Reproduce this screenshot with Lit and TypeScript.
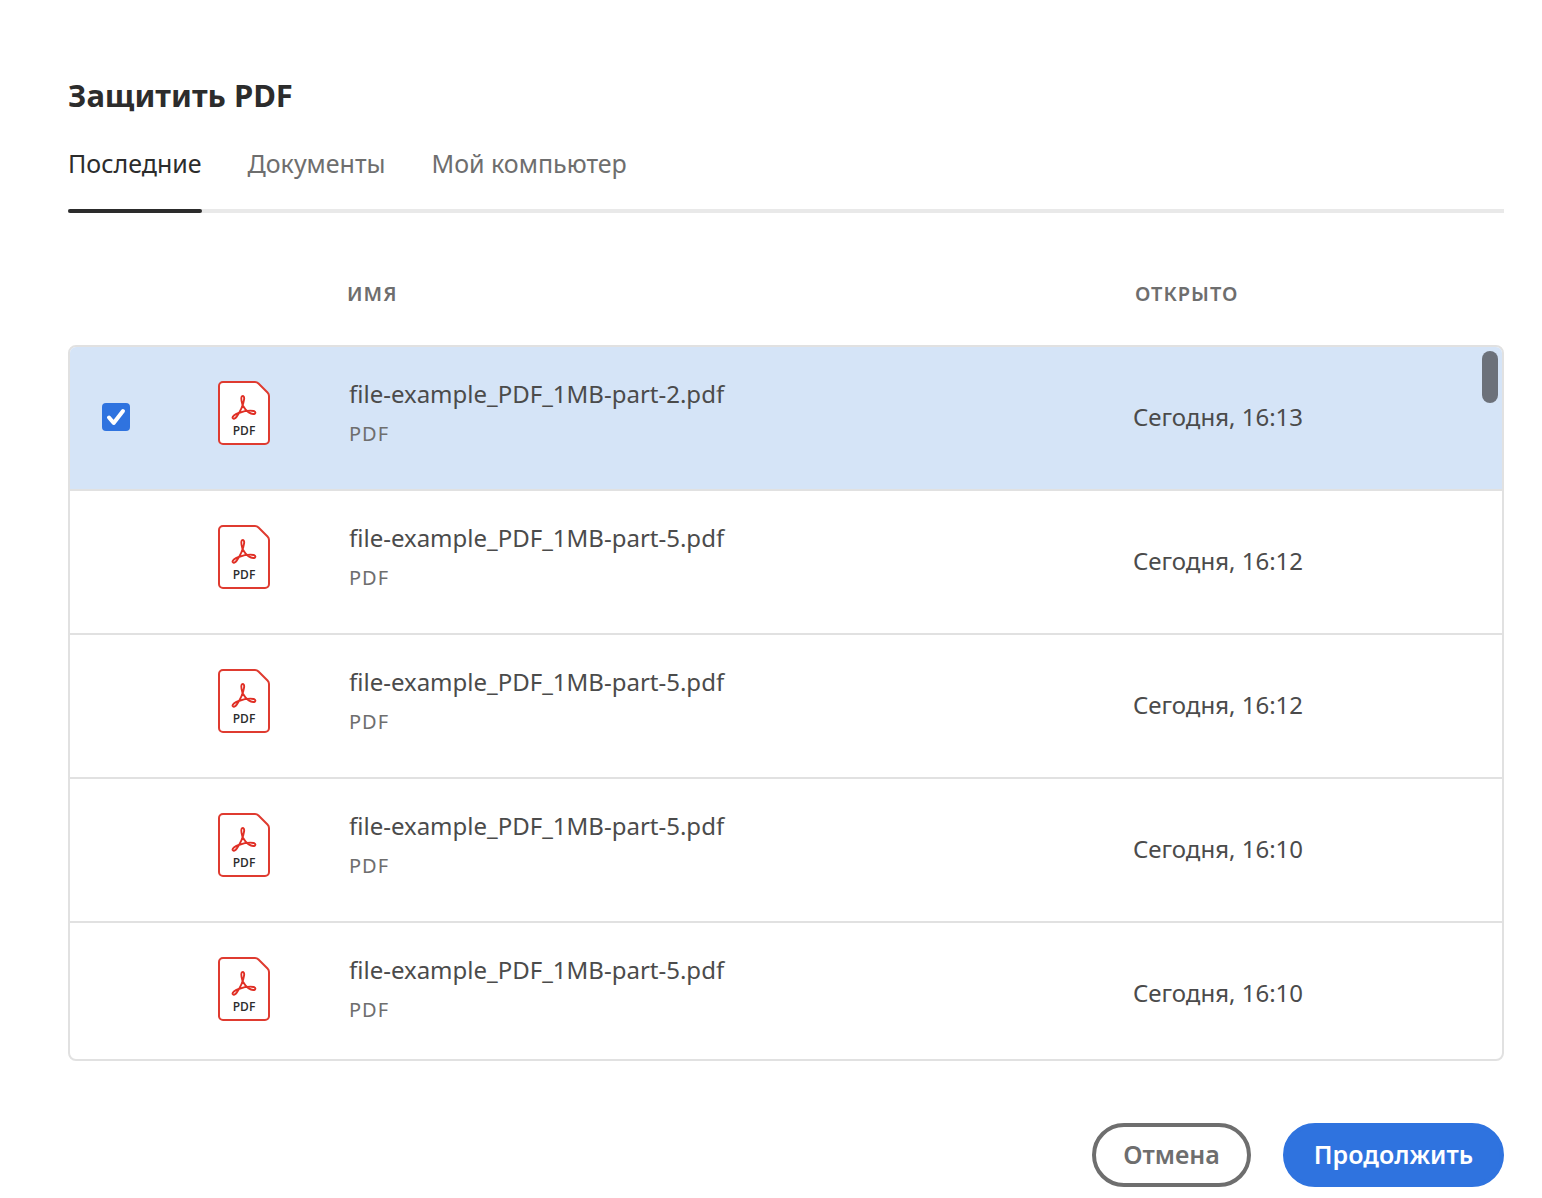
import { LitElement, html, css, svg } from "lit";
import { customElement, property, state } from "lit/decorators.js";

interface RecentFile {
  name: string;
  type: string;
  opened: string;
}

const FILES: RecentFile[] = [
  { name: "file-example_PDF_1MB-part-2.pdf", type: "PDF", opened: "Сегодня, 16:13" },
  { name: "file-example_PDF_1MB-part-5.pdf", type: "PDF", opened: "Сегодня, 16:12" },
  { name: "file-example_PDF_1MB-part-5.pdf", type: "PDF", opened: "Сегодня, 16:12" },
  { name: "file-example_PDF_1MB-part-5.pdf", type: "PDF", opened: "Сегодня, 16:10" },
  { name: "file-example_PDF_1MB-part-5.pdf", type: "PDF", opened: "Сегодня, 16:10" },
];

const TABS = ["Последние", "Документы", "Мой компьютер"];

const trefoil = svg`<path
  d="M24.6 24.2c-.9-3.200-2.300-7.500-.6-9 1.300-.9 2.500.6 2.100 3.200-.7 4.600-4.300 12.800-7.400 17.200-1.500 2.100-3.400 2.600-4 1.500-.8-1.600 2-3.700 6-5.100 4.800-1.700 11.600-2.700 14.800-2 2.400.5 2.500 2.600.4 3-3 .5-7.800-2.600-11.300-8.800Z"
  fill="none" stroke="#e02f25" stroke-width="1.900" stroke-linejoin="round"/>`;

@customElement("pdf-icon")
export class PdfIcon extends LitElement {
  static styles = css`
    :host {
      display: block;
      width: 52px;
      height: 64px;
    }
    .icon {
      display: block;
      width: 100%;
      height: 100%;
    }
    .caption {
      font: 600 12px "Open Sans", "Noto Sans", sans-serif;
      fill: #2c2c2c;
    }
  `;

  render() {
    return html`<svg class="icon" viewBox="0 0 52 64" aria-hidden="true">
      <path
        d="M5 1H37Q39 1 40.500 2.500L49.500 11.500Q51 13 51 15V59a4 4 0 0 1-4 4H5a4 4 0 0 1-4-4V5a4 4 0 0 1 4-4Z"
        fill="#fff" stroke="#df3b30" stroke-width="2" stroke-linejoin="round"/>
      ${trefoil}
      <text class="caption" x="26" y="54" text-anchor="middle">PDF</text>
    </svg>`;
  }
}

@customElement("file-table")
export class FileTable extends LitElement {
  @property({ attribute: false }) files: RecentFile[] = [];
  @property({ type: Number }) selected = 0;

  static styles = css`
    :host {
      display: block;
      position: relative;
    }
    .table,
    .head,
    .body {
      display: block;
    }
    .row {
      display: grid;
      grid-template-columns: 116px 131px minmax(0, 1fr) 369px;
      padding-left: 32px;
    }
    .cell {
      padding: 0;
      text-align: left;
      font-weight: 400;
    }
    .head .row {
      padding-bottom: 36px;
    }
    .head .heading {
      font-size: 20px;
      line-height: 30px;
      font-weight: 600;
      letter-spacing: 1px;
      color: #6e6e6e;
      text-transform: uppercase;
    }
    .body {
      box-sizing: border-box;
      max-height: 716px;
      overflow: hidden auto;
      scrollbar-width: none;
      border: 2px solid #e1e1e1;
      border-radius: 8px;
    }
    .file {
      box-sizing: border-box;
      height: 144px;
      padding-bottom: 2px;
      border-bottom: 2px solid #e1e1e1;
      align-items: center;
    }
    .file.chosen {
      background: #d5e4f7;
    }
    .icon-cell {
      align-self: start;
      padding-top: 34px;
    }
    .name-cell {
      align-self: start;
      padding-top: 29px;
    }
    .name {
      display: block;
      font-size: 24px;
      line-height: 36px;
      color: #4b4b4b;
      white-space: nowrap;
    }
    .type {
      display: block;
      font-size: 20px;
      line-height: 44px;
      letter-spacing: 1px;
      color: #6e6e6e;
    }
    .date {
      font-size: 24px;
      line-height: 36px;
      color: #4b4b4b;
    }
    .check {
      display: grid;
      width: 28px;
      height: 28px;
    }
    .box {
      grid-area: 1 / 1;
      appearance: none;
      margin: 0;
      width: 28px;
      height: 28px;
      border: 2px solid #6e6e6e;
      border-radius: 4px;
      opacity: 0;
    }
    .file:hover .box,
    .box:focus-visible {
      opacity: 1;
    }
    .box:checked {
      opacity: 1;
      border: 0;
      background: #2f73df;
    }
    .tick {
      grid-area: 1 / 1;
      z-index: 1;
      width: 28px;
      height: 28px;
      pointer-events: none;
      visibility: hidden;
    }
    .box:checked + .tick {
      visibility: visible;
    }
    .thumb {
      position: absolute;
      right: 6px;
      bottom: 658px;
      width: 16px;
      height: 52px;
      border-radius: 8px;
      background: #6c717a;
      pointer-events: none;
    }
  `;

  private pick(index: number) {
    this.selected = this.selected === index ? -1 : index;
  }

  render() {
    return html`<table class="table">
        <thead class="head">
          <tr class="row">
            <td class="cell"></td>
            <td class="cell"></td>
            <th class="cell heading" scope="col">Имя</th>
            <th class="cell heading" scope="col">Открыто</th>
          </tr>
        </thead>
        <tbody class="body">
          ${this.files.map(
            (file, i) => html`<tr class="row file ${i === this.selected ? "chosen" : ""}">
              <td class="cell">
                <label class="check">
                  <input
                    class="box"
                    type="checkbox"
                    aria-labelledby="name-${i}"
                    .checked=${i === this.selected}
                    @change=${() => this.pick(i)}
                  />
                  <svg class="tick" viewBox="0 0 28 28" aria-hidden="true">
                    <path d="M7 14.500 11.700 20 21 8" fill="none" stroke="#fff" stroke-width="4"
                      stroke-linecap="round" stroke-linejoin="round"/>
                  </svg>
                </label>
              </td>
              <td class="cell icon-cell"><pdf-icon></pdf-icon></td>
              <td class="cell name-cell">
                <span class="name" id="name-${i}">${file.name}</span>
                <span class="type">${file.type}</span>
              </td>
              <td class="cell date">${file.opened}</td>
            </tr>`
          )}
        </tbody>
      </table>
      <div class="thumb"></div>`;
  }
}

@customElement("app-root")
export class AppRoot extends LitElement {
  @state() private tab = 0;

  static styles = css`
    :host {
      display: block;
      font-family: "Noto Sans", "Open Sans", sans-serif;
      background: #fff;
    }
    .dialog {
      padding: 71px 38px 11px 67px;
      padding-left: 68px;
    }
    .title {
      margin: 0;
      font-size: 31px;
      line-height: 48px;
      font-weight: 700;
      color: #2c2c2c;
    }
    .tabs {
      display: flex;
      gap: 46px;
      padding-top: 24px;
      margin-bottom: 66px;
      box-shadow: inset 0 -4px #e9e9e9;
    }
    .tab {
      padding: 0;
      border: 0;
      background: none;
      font-family: inherit;
      font-size: 25px;
      line-height: 40px;
      color: #6e6e6e;
      cursor: pointer;
    }
    .tab::after {
      content: "";
      display: block;
      height: 4px;
      margin-top: 26px;
      border-radius: 2px;
    }
    .tab.active {
      color: #2c2c2c;
    }
    .tab.active::after {
      background: #2c2c2c;
    }
    .actions {
      display: flex;
      justify-content: flex-end;
      gap: 32px;
      padding-top: 62px;
    }
    .button {
      box-sizing: border-box;
      height: 64px;
      padding: 0 27px 2px;
      border: 4px solid #6e6e6e;
      border-radius: 32px;
      background: #fff;
      font-family: inherit;
      font-size: 25px;
      font-weight: 600;
      line-height: 36px;
      color: #6e6e6e;
      cursor: pointer;
    }
    .button.primary {
      border-color: #2f73df;
      background: #2f73df;
      color: #fff;
    }
  `;

  render() {
    return html`<main class="dialog">
      <h1 class="title">Защитить PDF</h1>
      <div class="tabs" role="tablist">
        ${TABS.map(
          (label, i) => html`<button
            class="tab ${i === this.tab ? "active" : ""}"
            role="tab"
            aria-selected=${i === this.tab ? "true" : "false"}
            @click=${() => (this.tab = i)}
          >${label}</button>`
        )}
      </div>
      <file-table .files=${FILES}></file-table>
      <div class="actions">
        <button class="button">Отмена</button>
        <button class="button primary">Продолжить</button>
      </div>
    </main>`;
  }
}
